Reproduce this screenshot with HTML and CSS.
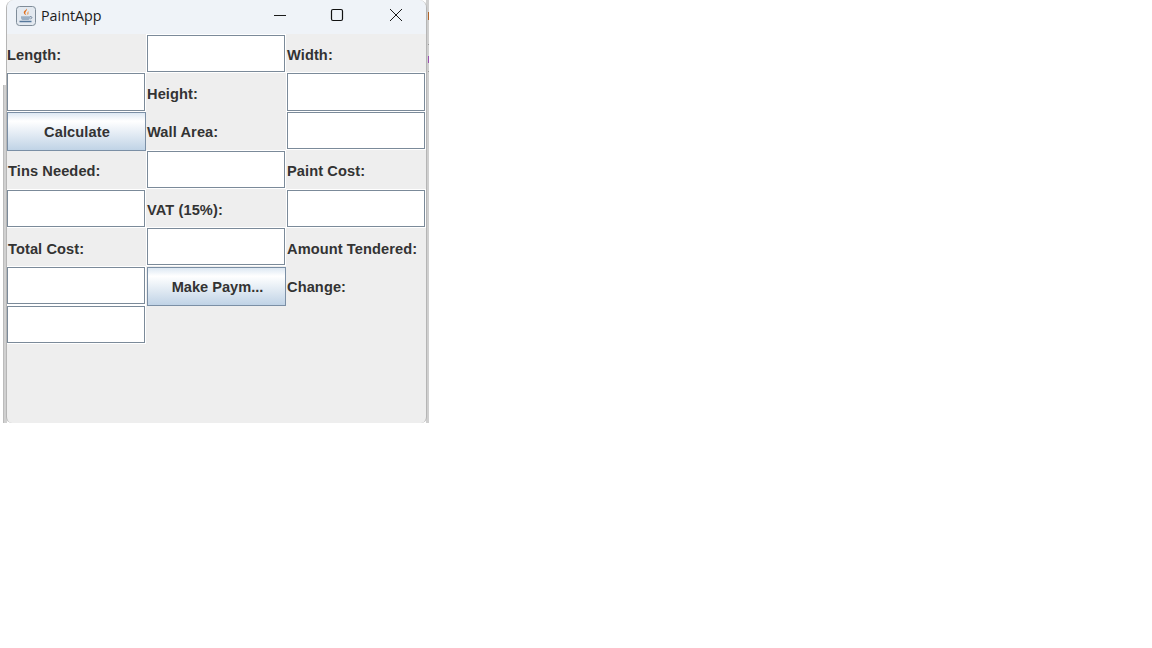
FILE: index.html
```html
<!DOCTYPE html>
<html lang="en">
<head>
<meta charset="utf-8">
<title>PaintApp</title>
<link rel="stylesheet" href="styles.css">
</head>
<body>
<div class="desktop">
  <div class="backdrop-left"></div>
  <div class="backdrop-right">
    <span class="mark mark-orange"></span>
    <span class="mark mark-purple"></span>
    <span class="mark mark-line1"></span>
    <span class="mark mark-line2"></span>
  </div>
  <div class="window">
    <div class="titlebar">
      <svg class="app-icon" width="20" height="20" viewBox="0 0 20 20">
        <rect x="0.5" y="0.5" width="19" height="19" rx="3" fill="#e3e9f0" stroke="#7f8c99"/>
        <path d="M10.500 2.500c1.500 2-2 3-1 5.500 .3.700 .9 1.200 .9 1.200-1.500-.5-3-1.700-2.600-3.300C8.200 4.500 10.700 4 10.500 2.500z" fill="#e0701f"/>
        <path d="M12.800 5c-1.300 .8-2 1.800-1.200 4 .4-.4 1.200-1 .9-2-.1-.6-.1-1.200 .3-2z" fill="#ee9a4d"/>
        <path d="M5 10.200h9v1.500c0 1.400-1.100 2.300-2.300 2.300H7.300C6 14 5 13.100 5 11.700z" fill="#9db0c4"/>
        <path d="M14 10.700h1c1.300 0 1.300 2-.7 2.200" fill="none" stroke="#6c8199"/>
        <path d="M3.500 15.500h12" stroke="#56789b" stroke-width="1.400"/>
      </svg>
      <span class="app-title">PaintApp</span>
      <div class="controls">
        <svg class="ctl" width="14" height="14" viewBox="0 0 14 14"><path d="M1 7.500h12" stroke="#1a1a1a" stroke-width="1"/></svg>
        <svg class="ctl" width="14" height="14" viewBox="0 0 14 14"><rect x="1.500" y="1.500" width="11" height="11" rx="1.500" fill="none" stroke="#111" stroke-width="1.200"/></svg>
        <svg class="ctl" width="14" height="14" viewBox="0 0 14 14"><path d="M1 1l12 12M13 1L1 13" stroke="#1a1a1a" stroke-width="1"/></svg>
      </div>
    </div>
    <div class="form">
      <div class="label">Length:</div>
      <div class="field"></div>
      <div class="label">Width:</div>
      <div class="field"></div>
      <div class="label">Height:</div>
      <div class="field"></div>
      <button class="btn">Calculate</button>
      <div class="label">Wall Area:</div>
      <div class="field"></div>
      <div class="label label-in">Tins Needed:</div>
      <div class="field"></div>
      <div class="label">Paint Cost:</div>
      <div class="field"></div>
      <div class="label">VAT (15%):</div>
      <div class="field"></div>
      <div class="label label-in">Total Cost:</div>
      <div class="field"></div>
      <div class="label">Amount Tendered:</div>
      <div class="field"></div>
      <button class="btn btn-tight">Make Paym...</button>
      <div class="label">Change:</div>
      <div class="field"></div>
    </div>
  </div>
</div>
</body>
</html>
```
FILE: styles.css
```css
* { box-sizing: border-box; }
html, body { margin: 0; height: 100%; background: #fff; }
.desktop { position: relative; width: 1152px; height: 648px; overflow: hidden; }
.backdrop-left { position: absolute; left: 3px; top: 85px; width: 4px; height: 338px; background: #d0d0d0; border-left: 1px solid #bbb; }
.backdrop-right { position: absolute; left: 426px; top: 0; width: 3px; height: 423px; background: #cfcfcf; }
.mark { position: absolute; left: 2px; width: 1px; }
.mark-orange { top: 12px; height: 8px; background: #b0642a; }
.mark-purple { top: 56px; height: 7px; background: #9a4fb0; }
.mark-line1 { top: 44px; height: 1px; background: #999; }
.mark-line2 { top: 71px; height: 1px; background: #999; }
.window {
  position: absolute; left: 6px; top: 0; width: 421px; height: 423px;
  background: #eeeeee; border-radius: 8px 8px 6px 6px; overflow: hidden;
  border-left: 1px solid #b5b5b5; border-right: 1px solid #b5b5b5;
  font-family: "Liberation Sans", Arial, sans-serif;
}
.titlebar { display: flex; align-items: center; height: 34px; background: #eff3f8; padding-left: 9px; }
.app-icon { flex: none; margin-top: -2px; }
.app-title { margin-left: 5px; font: 14.300px "Open Sans", "Noto Sans", sans-serif; color: #1c1c1c; margin-top: -3px; }
.controls { margin-left: auto; display: flex; align-items: center; margin-top: -5px; padding-right: 23px; gap: 45px; }
.ctl:first-child { margin-right: -1px; position: relative; left: 1px; }
.form {
  display: grid;
  grid-template-columns: repeat(3, 140px);
  grid-auto-rows: 38.700px;
  padding-top: 0.750px;
}
.label { display: flex; align-items: center; font-size: 14.600px; font-weight: 700; letter-spacing: 0.100px; color: #333; white-space: nowrap; padding-top: 2px; }
.label-in { padding-left: 1px; }
.field {
  background: #fff; border: 1px solid #7b8a99; margin: 0 2px 1px 0;
  outline: 1px solid #fff; outline-offset: 0; height: 37.100px;
}
.btn {
  font: 700 14.600px "Liberation Sans", Arial, sans-serif; letter-spacing: 0.100px; color: #333; padding: 0 0 0 1px;
  border: 1px solid #7b8fa5; margin: 0; height: 39px; width: 139px;
  background: linear-gradient(#dde8f3 0%, #ffffff 22%, #c0d3e6 100%);
}
.btn-tight { letter-spacing: 0; padding: 1px 0 0 2px; }
```
